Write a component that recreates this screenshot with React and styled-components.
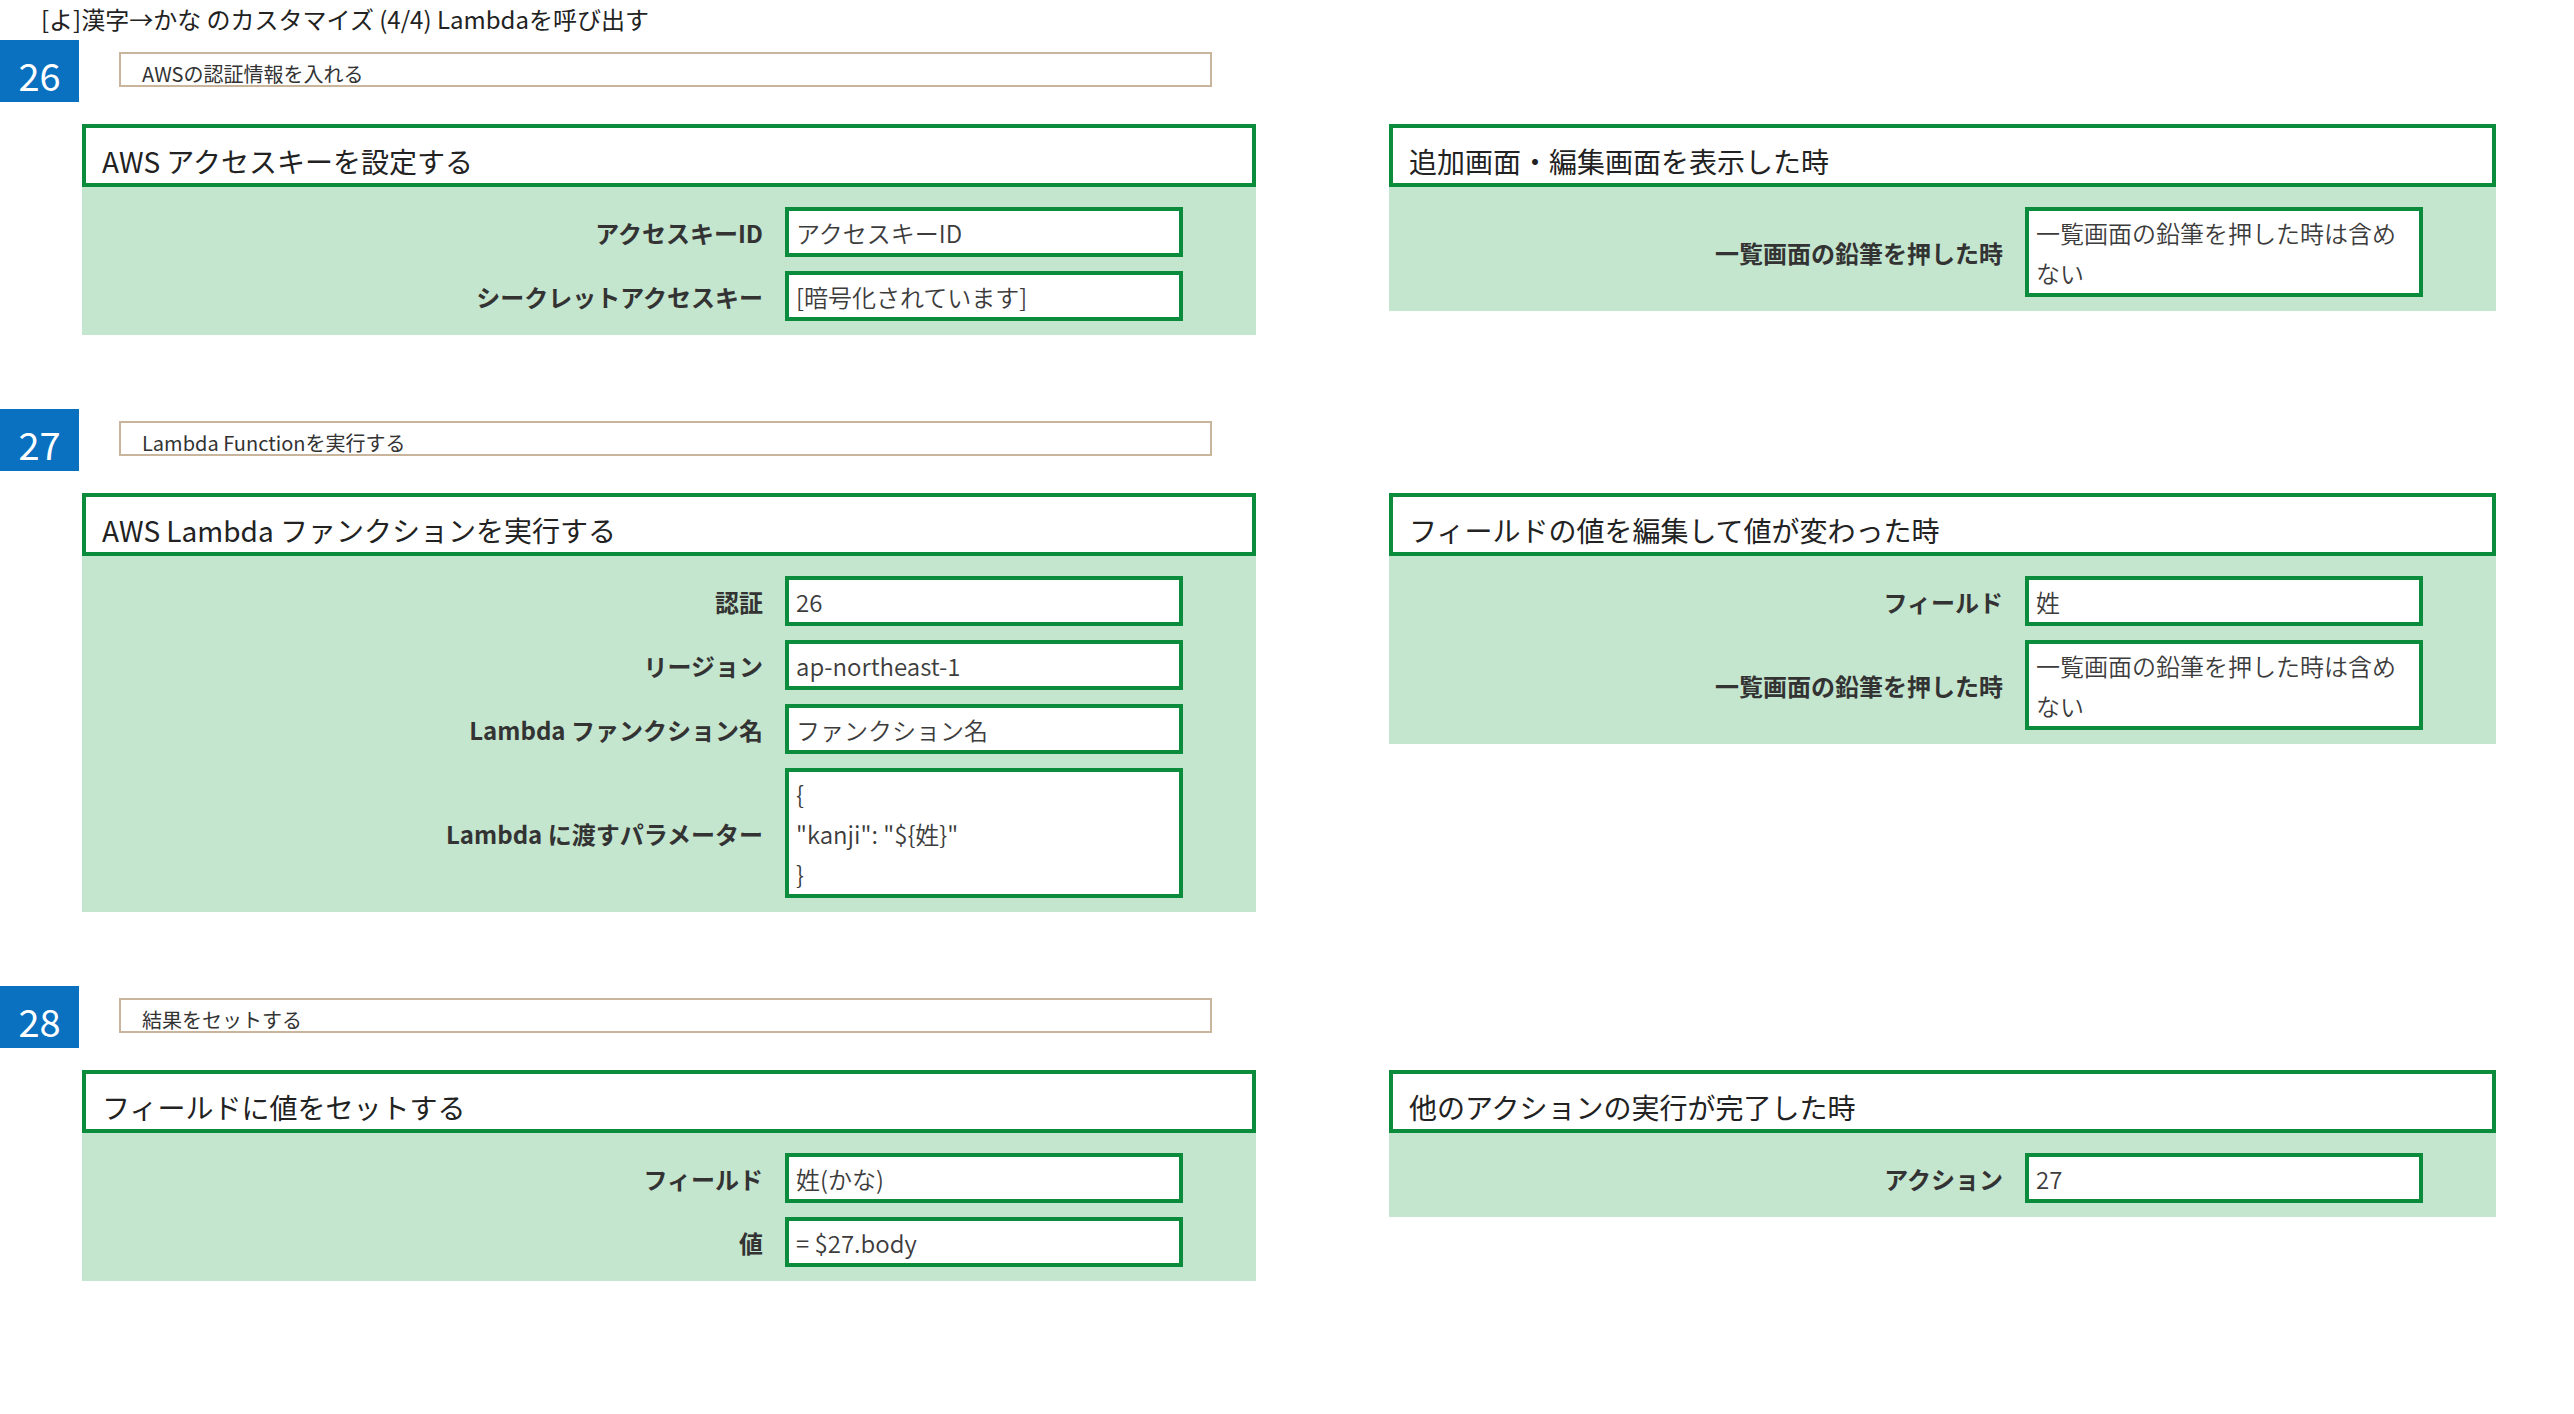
import React from 'react';
import styled, { createGlobalStyle } from 'styled-components';

const Global = createGlobalStyle`
  html, body {
    margin: 0;
    background: #ffffff;
  }

  body {
    font-family: "Noto Sans CJK JP", "Noto Sans", sans-serif;
    color: #222;
  }
`;

const Page = styled.div`
  width: 2574px;
  min-height: 1414px;
`;

const PageTitle = styled.div`
  padding: 3px 41px 0;
  height: 37px;
  font-size: 24px;
  line-height: 32px;
  color: #222;
`;

const Section = styled.section`
  margin-bottom: 74px;
`;

const StepRow = styled.div`
  display: flex;
  align-items: flex-start;
  gap: 40px;
`;

const Badge = styled.div`
  width: 79px;
  height: 62px;
  box-sizing: border-box;
  padding-top: 8px;
  background: #0a70c0;
  color: #fff;
  font-size: 38px;
  line-height: 54px;
  text-align: center;
`;

const Memo = styled.div`
  margin-top: 12px;
  width: 1093px;
  height: 35px;
  box-sizing: border-box;
  border: 2px solid #c9b59c;
  padding: 7px 21px 0;
  font-size: 20px;
  line-height: 25px;
  color: #333;
  overflow: hidden;
`;

const Columns = styled.div`
  display: grid;
  grid-template-columns: 1174px 1107px;
  column-gap: 133px;
  align-items: start;
  padding-left: 82px;
  margin-top: 22px;
`;

const Panel = styled.div`
  display: flex;
  flex-direction: column;
`;

const PanelHead = styled.div`
  border: 4px solid #0b8c3c;
  background: #fff;
  padding: 15px 16px 4px;
  font-size: 28px;
  line-height: 36px;
  color: #222;
`;

const PanelBody = styled.div`
  background: #c4e5ce;
  padding: 20px 73px 14px 0;
  display: flex;
  flex-direction: column;
  gap: 14px;
`;

const Field = styled.div`
  display: flex;
  align-items: center;
  gap: 22px;
`;

const Label = styled.div`
  flex: 1;
  text-align: right;
  font-size: 24px;
  font-weight: 700;
  color: #333;
  white-space: nowrap;
`;

const Value = styled.div`
  width: 398px;
  box-sizing: border-box;
  border: 4px solid #0b8c3c;
  background: #fff;
  padding: 2px 7px 0;
  font-size: 24px;
  font-weight: 350;
  line-height: 40px;
  color: #3c3c3c;
  white-space: pre-wrap;
`;

const steps = [
  {
    no: 26,
    memo: 'AWSの認証情報を入れる',
    action: {
      title: 'AWS アクセスキーを設定する',
      fields: [
        ['アクセスキーID', 'アクセスキーID'],
        ['シークレットアクセスキー', '[暗号化されています]'],
      ],
    },
    trigger: {
      title: '追加画面・編集画面を表示した時',
      fields: [['一覧画面の鉛筆を押した時', '一覧画面の鉛筆を押した時は含め\nない']],
    },
  },
  {
    no: 27,
    memo: 'Lambda Functionを実行する',
    action: {
      title: 'AWS Lambda ファンクションを実行する',
      fields: [
        ['認証', '26'],
        ['リージョン', 'ap-northeast-1'],
        ['Lambda ファンクション名', 'ファンクション名'],
        ['Lambda に渡すパラメーター', '{\n"kanji": "${姓}"\n}'],
      ],
    },
    trigger: {
      title: 'フィールドの値を編集して値が変わった時',
      fields: [
        ['フィールド', '姓'],
        ['一覧画面の鉛筆を押した時', '一覧画面の鉛筆を押した時は含め\nない'],
      ],
    },
  },
  {
    no: 28,
    memo: '結果をセットする',
    action: {
      title: 'フィールドに値をセットする',
      fields: [
        ['フィールド', '姓(かな)'],
        ['値', '= $27.body'],
      ],
    },
    trigger: {
      title: '他のアクションの実行が完了した時',
      fields: [['アクション', '27']],
    },
  },
];

function Box({ data }) {
  return (
    <Panel>
      <PanelHead>{data.title}</PanelHead>
      <PanelBody>
        {data.fields.map(([label, value]) => (
          <Field key={label}>
            <Label>{label}</Label>
            <Value>{value}</Value>
          </Field>
        ))}
      </PanelBody>
    </Panel>
  );
}

export default function App() {
  return (
    <Page>
      <Global />
      <PageTitle>[よ]漢字→かな のカスタマイズ (4/4) Lambdaを呼び出す</PageTitle>
      {steps.map(step => (
        <Section key={step.no}>
          <StepRow>
            <Badge>{step.no}</Badge>
            <Memo>{step.memo}</Memo>
          </StepRow>
          <Columns>
            <Box data={step.action} />
            <Box data={step.trigger} />
          </Columns>
        </Section>
      ))}
    </Page>
  );
}
